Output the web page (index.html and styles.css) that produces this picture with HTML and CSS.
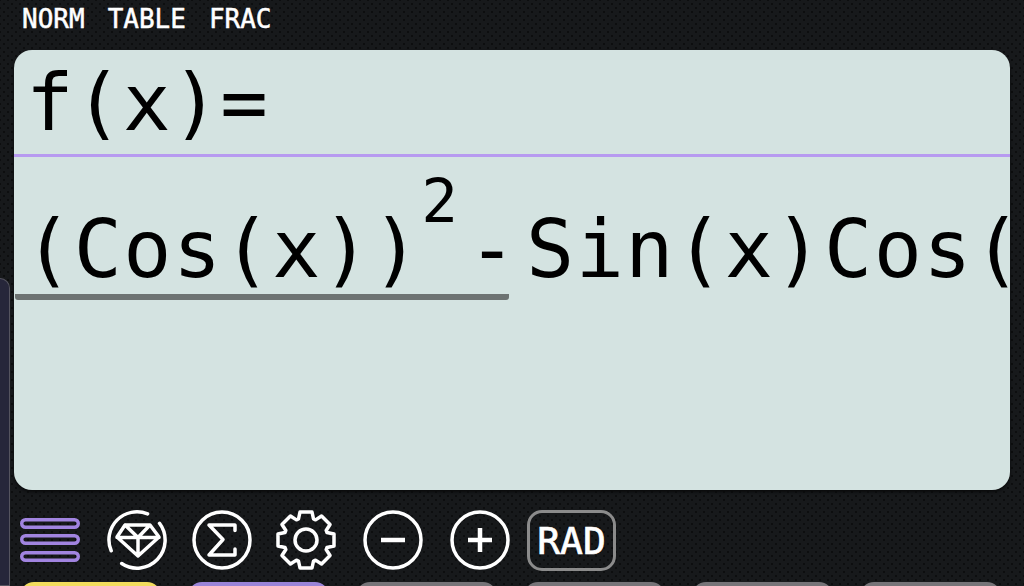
FILE: index.html
```html
<!DOCTYPE html>
<html>

<head>
    <meta charset="UTF-8">
    <title>Calculator</title>
    <link rel="stylesheet" href="styles.css">
</head>

<body>
    <div class="drawer"></div>
    <div class="status">
        <span>NORM</span>
        <span>TABLE</span>
        <span>FRAC</span>
    </div>
    <div class="screen">
        <div class="fname">f(x)=</div>
        <div class="expr">
            <div class="numer">(Cos(x))<sup class="pow">2</sup>-</div>
            <div class="rest">Sin(x)Cos(</div>
        </div>
    </div>
    <div class="tools">
        <svg class="ico menu" viewBox="0 0 60 44">
            <rect class="pill" x="1.700" y="1.700" width="56.600" height="7.600" rx="3.800" />
            <rect class="pill" x="1.700" y="17.700" width="56.600" height="7.600" rx="3.800" />
            <rect class="pill" x="1.700" y="34.700" width="56.600" height="7.600" rx="3.800" />
        </svg>
        <svg class="ico wide-l" viewBox="0 0 60 60">
            <path class="line" d="M40.600 3.900A28 28 0 0 0 4.200 40.800" />
            <path class="line" d="M52.500 13.300A28 28 0 0 1 14.700 53.500" />
            <path class="line" d="M18 15H43L52 27L31 46L10 27ZM10 27.500H52M18 15L31 27.500L43 15M31 27.500V46" />
        </svg>
        <svg class="ico" viewBox="0 0 60 60">
            <circle class="line" cx="30" cy="30" r="28" />
            <path class="line" d="M43 20.500V15H17L31 29.500L17 45H43V39" />
        </svg>
        <svg class="ico gear" viewBox="0 0 60 60">
            <path class="line" d="M22.500 9L24 2H36L37.500 9L39.550 9.850L45.560 5.960L54.040 14.440L50.150 20.450L51 22.500L58 24V36L51 37.500L50.150 39.550L54.040 45.560L45.560 54.040L39.550 50.150L37.500 51L36 58H24L22.500 51L20.450 50.150L14.440 54.040L5.960 45.560L9.850 39.550L9 37.500L2 36V24L9 22.500L9.850 20.450L5.960 14.440L14.440 5.960L20.450 9.850Z" />
            <circle class="line" cx="30" cy="30" r="11" />
        </svg>
        <svg class="ico wide-l" viewBox="0 0 60 60">
            <circle class="line" cx="30" cy="30" r="28" />
            <path class="line sign" d="M18 30H42" />
        </svg>
        <svg class="ico wide-l" viewBox="0 0 60 60">
            <circle class="line" cx="30" cy="30" r="28" />
            <path class="line sign" d="M18 30H42M30 18V42" />
        </svg>
        <div class="rad">RAD</div>
    </div>
    <div class="keys">
        <div class="key key-yellow"></div>
        <div class="key key-purple"></div>
        <div class="key"></div>
        <div class="key"></div>
        <div class="key"></div>
        <div class="key"></div>
    </div>
</body>

</html>
```

FILE: styles.css
```css
* {
    margin: 0;
    padding: 0;
    box-sizing: border-box;
}

html, body {
    height: 586px;
    overflow: hidden;
}

body {
    position: relative;
    background-color: #17191b;
    background-image: radial-gradient(#0d0e0f 1px, transparent 1.5px), radial-gradient(#0d0e0f 1px, transparent 1.5px);
    background-size: 8px 8px;
    background-position: 0 0, 4px 4px;
    font-family: "DejaVu Sans Mono", monospace;
    padding: 0 14px;
}

.drawer {
    position: absolute;
    left: 0;
    top: 278px;
    width: 10px;
    height: 308px;
    background: #26263a;
    border: #55545f 1px solid;
    border-left: 0;
    border-radius: 0 10px 0 0;
}

.status {
    height: 50px;
    padding: 2px 0 0 8px;
    display: flex;
    gap: 23px;
    color: #fff;
    font-size: 26px;
    line-height: 34px;
    -webkit-text-stroke: .5px #fff;
}

.screen {
    height: 440px;
    background: #d4e3e1;
    border-radius: 18px;
    overflow: hidden;
    color: #000;
    box-shadow: 0 2px 3px #0a0b0c;
}

.fname {
    height: 107px;
    border-bottom: #b79af0 3px solid;
    padding-left: 12px;
    font-size: 79px;
    letter-spacing: 1px;
    line-height: 106px;
}

.expr {
    display: flex;
    white-space: nowrap;
    height: 160px;
    font-size: 80px;
    letter-spacing: 1.500px;
}

.numer {
    width: 494px;
    height: 143px;
    margin-left: 1px;
    padding-left: 9px;
    border-bottom: #6d7372 6px solid;
    border-radius: 0 0 3px 3px;
    line-height: 186px;
    flex: none;
}

.pow {
    font-size: 61px;
    letter-spacing: 0;
    line-height: 0;
    vertical-align: 55px;
    margin: 0 10px 0 0;
}

.rest {
    line-height: 186px;
    margin-left: 17px;
}

.tools {
    display: flex;
    align-items: center;
    gap: 25px;
    height: 60px;
    margin-top: 20px;
    padding-left: 6px;
}

.ico {
    width: 60px;
    height: 60px;
    flex: none;
}

.menu {
    height: 44px;
}

.wide-l {
    margin-left: 2px;
}

.gear {
    margin-left: -1px;
}

.pill {
    fill: none;
    stroke: #a184e0;
    stroke-width: 3.400px;
}

.line {
    fill: none;
    stroke: #fff;
    stroke-width: 3.500px;
    stroke-linejoin: round;
    stroke-linecap: round;
}

.line.sign {
    stroke-width: 4.500px;
    stroke-linecap: butt;
}

.rad {
    width: 89px;
    height: 61px;
    margin-left: -8px;
    border: #8b8b8b 3px solid;
    border-radius: 15px;
    color: #fff;
    font-size: 38px;
    line-height: 57px;
    text-align: center;
    -webkit-text-stroke: .7px #fff;
}

.keys {
    display: flex;
    gap: 27px;
    height: 4px;
    margin-top: 12px;
    padding-left: 6px;
    overflow: hidden;
}

.key {
    width: 141px;
    height: 40px;
    flex: none;
    background: #767478;
    border-radius: 14px 14px 0 0;
}

.key-yellow {
    background: #f2dc5d;
}

.key-purple {
    background: #9a84d8;
}
```
